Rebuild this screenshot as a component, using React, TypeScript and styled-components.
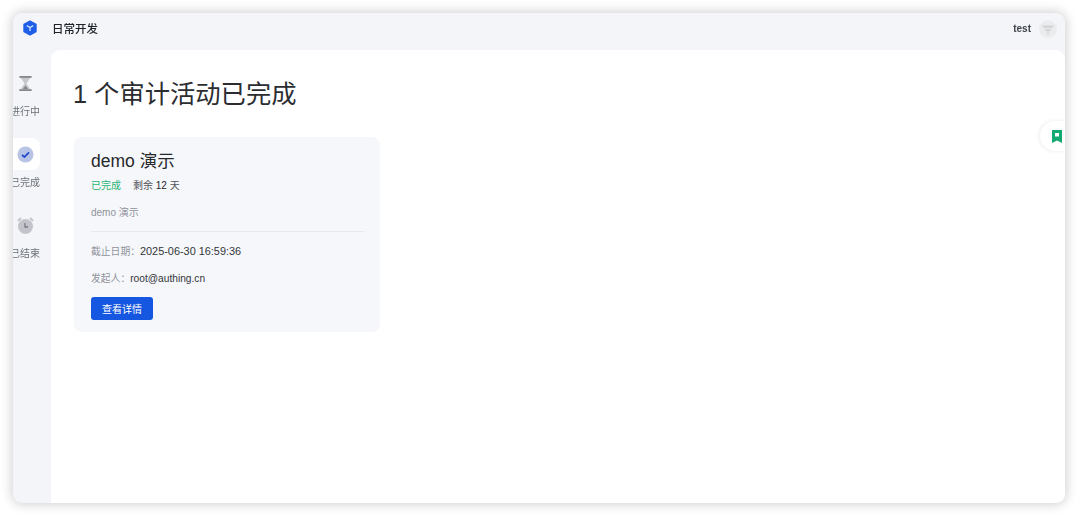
import { FC, ReactNode } from "react";
import styled, { createGlobalStyle } from "styled-components";

const GlobalStyle = createGlobalStyle`
  html, body {
    margin: 0;
    padding: 0;
    background: #fff;
    font-family: "Liberation Sans", "Noto Sans CJK SC", sans-serif;
    overflow: hidden;
  }
`;

const Page = styled.div`
  width: 1080px;
  height: 516px;
  padding: 13px 15px 13px 13px;
  box-sizing: border-box;
`;

const Frame = styled.div`
  width: 100%;
  height: 100%;
  display: flex;
  flex-direction: column;
  background: #f3f5f9;
  border-radius: 9px;
  overflow: hidden;
  box-shadow: 0 0 12px 1px rgba(0, 0, 0, 0.2);
  filter: blur(0.45px);
`;

const Header = styled.header`
  height: 37px;
  flex: none;
  box-sizing: border-box;
  display: flex;
  align-items: center;
  padding: 0 8px 7px 8px;
`;

const Logo = styled.div`
  width: 18px;
  height: 18px;
  margin-right: 13px;
  display: flex;
`;

const AppName = styled.div`
  font-size: 11.5px;
  font-weight: 500;
  color: #1f2329;
  flex: 1;
`;

const UserName = styled.div`
  font-size: 10px;
  font-weight: 700;
  color: #40444c;
  margin-right: 8px;
`;

const Avatar = styled.div`
  width: 18px;
  height: 18px;
  margin-top: 2px;
  border-radius: 50%;
  background: #ebecee;
  display: flex;
  align-items: center;
  justify-content: center;
`;

const Body = styled.div`
  flex: 1;
  display: flex;
  min-height: 0;
`;

const Sidebar = styled.nav`
  width: 38px;
  flex: none;
  display: flex;
  flex-direction: column;
  align-items: flex-start;
  padding-top: 17px;
  gap: 19px;
  overflow: hidden;
`;

const NavItem = styled.div`
  display: flex;
  flex-direction: column;
  align-items: center;
  width: 27px;
`;

const NavIcon = styled.div<{ $active?: boolean }>`
  width: 27px;
  height: 32px;
  box-sizing: border-box;
  padding-right: 3px;
  display: flex;
  align-items: center;
  justify-content: center;
  border-radius: 0 8px 8px 0;
  background: ${(p) => (p.$active ? "#fff" : "transparent")};
`;

const NavLabel = styled.div`
  font-size: 10px;
  line-height: 14px;
  margin-top: 6px;
  white-space: nowrap;
  color: #6d7178;
  height: 14px;
  width: 30px;
  margin-left: -3px;
`;

const Main = styled.main`
  flex: 1;
  position: relative;
  background: #fff;
  border-radius: 9px 9px 0 0;
  padding: 27px 0 0 22px;
`;

const Heading = styled.h1`
  margin: 0 0 26px;
  font-size: 25.3px;
  line-height: 34px;
  font-weight: 400;
  color: #2b2d31;
`;

const Card = styled.section`
  width: 306px;
  height: 195px;
  margin-left: 1px;
  box-sizing: border-box;
  background: #f6f7fa;
  border-radius: 8px;
  padding: 14px 17px 0;
`;

const CardTitle = styled.div`
  font-size: 17.5px;
  line-height: 21px;
  color: #26282c;
`;

const StatusRow = styled.div`
  display: flex;
  gap: 12px;
  margin-top: 7px;
  font-size: 10px;
  line-height: 14px;
  color: #4f535a;
`;

const Status = styled.span`
  color: #27b573;
`;

const Strong = styled.b`
  color: #26282c;
  font-weight: 500;
`;

const Description = styled.div`
  margin-top: 13px;
  font-size: 10px;
  line-height: 14px;
  color: #8f939a;
`;

const Divider = styled.hr`
  margin: 11px 0 0;
  border: 0;
  border-top: 1px solid #e7e9ed;
  width: 273px;
`;

const Meta = styled.div<{ $gap: number }>`
  margin-top: ${(p) => p.$gap}px;
  font-size: 9.8px;
  line-height: 14px;
  color: #8f939a;
`;

const MetaValue = styled.span<{ $size: number }>`
  color: #33363b;
  font-size: ${(p) => p.$size}px;
`;

const DetailButton = styled.button`
  display: block;
  margin-top: 11px;
  width: 62px;
  height: 23px;
  padding: 0;
  border: 0;
  border-radius: 3px;
  background: #1557e0;
  color: #fff;
  font-family: inherit;
  font-size: 10px;
`;

const FloatTab = styled.div`
  position: absolute;
  top: 71px;
  right: 0;
  width: 25px;
  height: 30px;
  box-sizing: border-box;
  padding-left: 12px;
  display: flex;
  align-items: center;
  background: #fff;
  border-radius: 15px 0 0 15px;
  box-shadow: -1px 0 4px rgba(0, 0, 0, 0.08);
`;

const LogoIcon = () => (
  <svg width="18" height="18" viewBox="0 0 18 18">
    <path d="M9 2l6 3.4v7.2L9 16l-6-3.4V5.4z" fill="#1f5fe8" stroke="#1f5fe8" strokeWidth="1.4" strokeLinejoin="round" />
    <path d="M5.8 6.6L9 8.6l3.2-2M9 8.6v3.4" fill="none" stroke="#cfe0ff" strokeWidth="1.3" />
  </svg>
);

const HourglassIcon = () => (
  <svg width="15" height="17" viewBox="0 0 16 18">
    <rect x="1.5" y="1" width="13" height="2" fill="#85878c" />
    <rect x="1.5" y="15" width="13" height="2" fill="#85878c" />
    <path d="M3 3h10L9 9l4 6H3l4-6z" fill="#c6c7cb" />
    <path d="M5 15l3-4 3 4z" fill="#85878c" />
  </svg>
);

const CheckIcon = () => (
  <svg width="17" height="17" viewBox="0 0 17 17">
    <circle cx="8.5" cy="8.5" r="8" fill="#b8c4e6" />
    <path d="M5 8.8l2.4 2.2L12 6.4" fill="none" stroke="#1f47c8" strokeWidth="1.7" />
  </svg>
);

const ClockIcon = () => (
  <svg width="19" height="19" viewBox="0 0 19 19">
    <path d="M2 5l3-3M17 5l-3-3" stroke="#c3c4ca" strokeWidth="2" />
    <circle cx="9.5" cy="10.5" r="7.5" fill="#c3c4cb" />
    <path d="M9 7v4h3" fill="none" stroke="#7a7c84" strokeWidth="1.3" />
  </svg>
);

const AvatarIcon = () => (
  <svg width="12" height="11" viewBox="0 0 12 11">
    <path d="M0 1.5h12L10.5 4h-9z" fill="#d4d5d8" />
    <path d="M2.5 5h7L8 7.5H4z" fill="#d4d5d8" />
    <path d="M4.5 8.5h3L6 11z" fill="#d4d5d8" />
  </svg>
);

const BookmarkIcon = () => (
  <svg width="10" height="13" viewBox="0 0 10 13">
    <path d="M0 0h10v13L5 10.4 0 13z" fill="#14a970" />
    <rect x="3" y="3" width="4" height="3.5" fill="#fff" />
  </svg>
);

type SideEntryProps = {
  label: string;
  active?: boolean;
  children: ReactNode;
};

const SideEntry: FC<SideEntryProps> = ({ label, active, children }) => (
  <NavItem>
    <NavIcon $active={active}>{children}</NavIcon>
    <NavLabel>{label}</NavLabel>
  </NavItem>
);

export default function App() {
  return (
    <Page>
      <GlobalStyle />
      <Frame>
        <Header>
          <Logo>
            <LogoIcon />
          </Logo>
          <AppName>日常开发</AppName>
          <UserName>test</UserName>
          <Avatar>
            <AvatarIcon />
          </Avatar>
        </Header>
        <Body>
          <Sidebar>
            <SideEntry label="进行中">
              <HourglassIcon />
            </SideEntry>
            <SideEntry label="已完成" active>
              <CheckIcon />
            </SideEntry>
            <SideEntry label="已结束">
              <ClockIcon />
            </SideEntry>
          </Sidebar>
          <Main>
            <Heading>1 个审计活动已完成</Heading>
            <Card>
              <CardTitle>demo 演示</CardTitle>
              <StatusRow>
                <Status>已完成</Status>
                <span>
                  剩余 <Strong>12</Strong> 天
                </span>
              </StatusRow>
              <Description>demo 演示</Description>
              <Divider />
              <Meta $gap={12}>
                截止日期：<MetaValue $size={10.9}>2025-06-30 16:59:36</MetaValue>
              </Meta>
              <Meta $gap={13}>
                发起人：<MetaValue $size={10.2}>root@authing.cn</MetaValue>
              </Meta>
              <DetailButton>查看详情</DetailButton>
            </Card>
            <FloatTab>
              <BookmarkIcon />
            </FloatTab>
          </Main>
        </Body>
      </Frame>
    </Page>
  );
}
